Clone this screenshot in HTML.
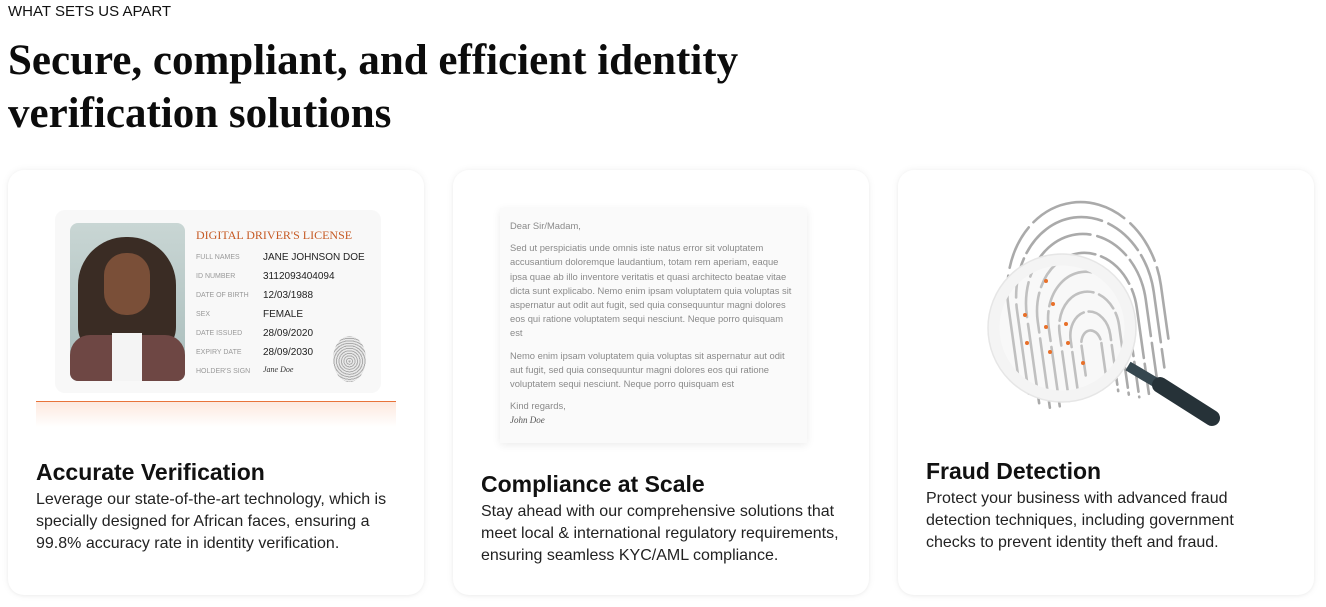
<!DOCTYPE html>
<html><head><meta charset="utf-8"><style>
*{margin:0;padding:0;box-sizing:border-box}
body{width:1326px;height:607px;background:#fff;font-family:"Liberation Sans",sans-serif;color:#111;position:relative;overflow:hidden}
.eyebrow{position:absolute;left:8px;top:3px;font-size:15px;color:#111}
h1{position:absolute;left:8px;top:34px;font-family:"Liberation Serif",serif;font-weight:700;font-size:43px;line-height:53px;letter-spacing:0px;color:#0c0c0c}
.card{position:absolute;top:170px;width:416px;height:425px;background:#fff;border-radius:16px;box-shadow:0 0 8px rgba(0,0,0,0.06),0 1px 3px rgba(0,0,0,0.04)}
.t{position:absolute;left:28px;font-size:23px;font-weight:700;color:#111}
.b{position:absolute;left:28px;width:360px;font-size:16px;line-height:22px;color:#222}
.lbl{position:absolute;font-size:7px;color:#999;left:196px}
.val{position:absolute;font-size:10px;color:#222;left:263px}
.letter{position:absolute;left:500px;top:208px;width:307px;height:235px;background:#fafafa;box-shadow:0 2px 8px rgba(0,0,0,0.08);font-size:9.4px;line-height:14.2px;color:#8a8a8a;padding:11px 10px 10px 10px}
.letter p{margin-bottom:8px}
</style></head><body>
<div class="eyebrow">WHAT SETS US APART</div>
<h1>Secure, compliant, and efficient identity<br>verification solutions</h1>

<div class="card" style="left:8px">
<div class="t" style="top:289px">Accurate Verification</div>
<div class="b" style="top:319px">Leverage our state-of-the-art technology, which is specially designed for African faces, ensuring a 99.8% accuracy rate in identity verification.</div>
</div>
<div class="card" style="left:453px">
<div class="t" style="top:301px">Compliance at Scale</div>
<div class="b" style="top:331px">Stay ahead with our comprehensive solutions that meet local &amp; international regulatory requirements, ensuring seamless KYC/AML compliance.</div>
</div>
<div class="card" style="left:898px">
<div class="t" style="top:288px">Fraud Detection</div>
<div class="b" style="top:318px;width:330px">Protect your business with advanced fraud detection techniques, including government checks to prevent identity theft and fraud.</div>
</div>

<!-- ID card -->
<div style="position:absolute;left:55px;top:210px;width:326px;height:183px;background:#f8f8f8;border-radius:10px"></div>
<div style="position:absolute;left:70px;top:223px;width:115px;height:158px;border-radius:8px;overflow:hidden;background:linear-gradient(#c9d6d4,#a8bcbb)">
 <div style="position:absolute;left:8px;top:14px;width:98px;height:120px;border-radius:48px 48px 30px 30px;background:#3a2c24"></div>
 <div style="position:absolute;left:34px;top:30px;width:46px;height:62px;border-radius:22px;background:#7a4f38"></div>
 <div style="position:absolute;left:0;top:112px;width:115px;height:50px;background:#6e4744;border-radius:20px 20px 0 0"></div>
 <div style="position:absolute;left:42px;top:110px;width:30px;height:48px;background:#f4f4f4"></div>
</div>
<div style="position:absolute;left:196px;top:228px;font-family:'Liberation Serif',serif;font-size:12px;color:#c65a24">DIGITAL DRIVER'S LICENSE</div>
<div class="lbl" style="top:254px">FULL NAMES</div><div class="val" style="top:252px">JANE JOHNSON DOE</div>
<div class="lbl" style="top:273px">ID NUMBER</div><div class="val" style="top:271px">3112093404094</div>
<div class="lbl" style="top:292px">DATE OF BIRTH</div><div class="val" style="top:290px">12/03/1988</div>
<div class="lbl" style="top:311px">SEX</div><div class="val" style="top:309px">FEMALE</div>
<div class="lbl" style="top:330px">DATE ISSUED</div><div class="val" style="top:328px">28/09/2020</div>
<div class="lbl" style="top:349px">EXPIRY DATE</div><div class="val" style="top:347px">28/09/2030</div>
<div class="lbl" style="top:368px">HOLDER'S SIGN</div><div style="position:absolute;left:263px;top:365px;font-size:8px;font-style:italic;font-family:'Liberation Serif',serif;color:#333">Jane Doe</div>
<div style="position:absolute;left:333px;top:336px;width:33px;height:46px;border-radius:50%;background:repeating-radial-gradient(circle at 50% 55%,#999 0 1px,#e4e4e4 1px 2.5px);opacity:.8"></div>
<div style="position:absolute;left:36px;top:401px;width:360px;height:26px;border-top:1.5px solid #e8733a;background:linear-gradient(#fde9df,#fff)"></div>

<!-- letter -->
<div class="letter">
<p>Dear Sir/Madam,</p>
<p>Sed ut perspiciatis unde omnis iste natus error sit voluptatem accusantium doloremque laudantium, totam rem aperiam, eaque ipsa quae ab illo inventore veritatis et quasi architecto beatae vitae dicta sunt explicabo. Nemo enim ipsam voluptatem quia voluptas sit aspernatur aut odit aut fugit, sed quia consequuntur magni dolores eos qui ratione voluptatem sequi nesciunt. Neque porro quisquam est</p>
<p>Nemo enim ipsam voluptatem quia voluptas sit aspernatur aut odit aut fugit, sed quia consequuntur magni dolores eos qui ratione voluptatem sequi nesciunt. Neque porro quisquam est</p>
<p style="margin:0">Kind regards,<br><i style="font-family:'Liberation Serif',serif;font-size:9px;color:#555">John Doe</i></p>
</div>

<!-- fingerprint -->
<svg style="position:absolute;left:0;top:0" width="1326" height="607">
<g fill="none" stroke="#aaa" stroke-width="2.6" stroke-linecap="round" transform="rotate(-8 1085 320)">
<path d="M1078 375 V345 A10 14 0 0 1 1098 345 V385" stroke-dasharray="30 4"/>
<path d="M1068 390 V338 A20 26 0 0 1 1108 338 V395" stroke-dasharray="40 5"/>
<path d="M1058 398 V330 A30 38 0 0 1 1118 330 V400" stroke-dasharray="50 6 20 5"/>
<path d="M1048 402 V322 A40 50 0 0 1 1128 322 V404" stroke-dasharray="60 6 30 5"/>
<path d="M1038 402 V315 A50 62 0 0 1 1138 315 V402" stroke-dasharray="70 6 40 6"/>
<path d="M1028 396 V308 A60 74 0 0 1 1148 308 V396" stroke-dasharray="80 7 35 6"/>
<path d="M1019 385 V302 A69 85 0 0 1 1157 302 V378" stroke-dasharray="90 7 40 6"/>
<path d="M1011 365 V296 A77 94 0 0 1 1165 296 V350" stroke-dasharray="100 8 45 7"/>
</g>
<circle cx="1062" cy="328" r="68" fill="rgba(235,235,235,0.35)" stroke="#f4f4f4" stroke-width="11"/>
<circle cx="1062" cy="328" r="74" fill="none" stroke="#e6e6e6" stroke-width="1.5"/>
<line x1="1128" y1="366" x2="1160" y2="385" stroke="#36474f" stroke-width="10"/>
<line x1="1160" y1="385" x2="1212" y2="418" stroke="#263238" stroke-width="16" stroke-linecap="round"/>
<g fill="#e8702a">
<circle cx="1046" cy="281" r="2"/><circle cx="1053" cy="304" r="2"/><circle cx="1025" cy="315" r="2"/>
<circle cx="1046" cy="327" r="2"/><circle cx="1066" cy="324" r="2"/><circle cx="1027" cy="343" r="2"/>
<circle cx="1068" cy="343" r="2"/><circle cx="1050" cy="352" r="2"/><circle cx="1083" cy="363" r="2"/>
</g>
</svg>
</body></html>
